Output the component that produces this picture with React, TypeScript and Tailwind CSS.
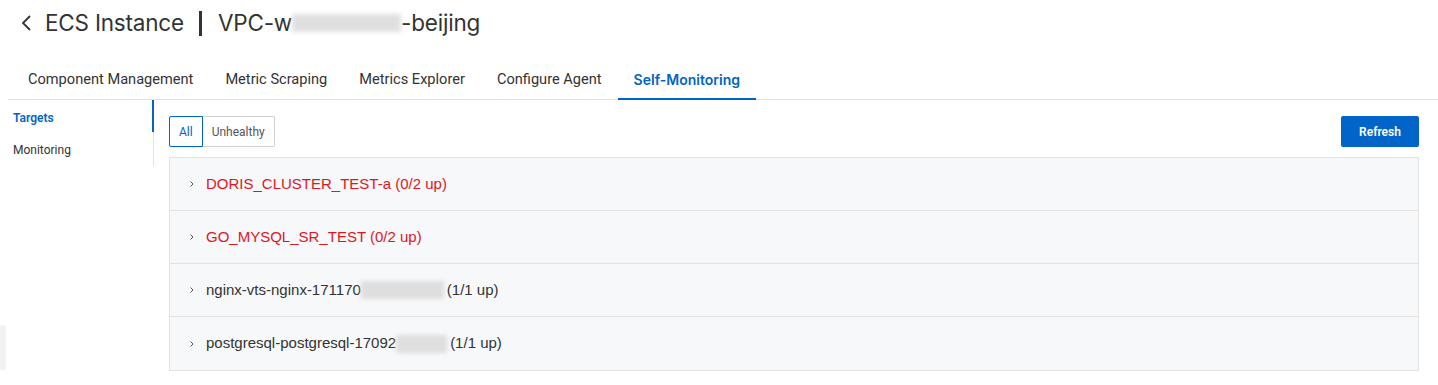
import React from 'react'

const font = { fontFamily: 'Roboto, "Noto Sans", sans-serif' }

const tabs = ['Component Management', 'Metric Scraping', 'Metrics Explorer', 'Configure Agent', 'Self-Monitoring']

const Chevron: React.FC = () => (
    <svg width="8" height="8" viewBox="0 0 8 8" className="shrink-0">
        <path d="M2.5 1.5 L5 4 L2.5 6.5" fill="none" stroke="#555" strokeWidth="1" />
    </svg>
)

const Blur: React.FC<{ w: number }> = ({ w }) => (
    <span
        className="inline-block h-[18px] align-middle bg-[#d8d8d8] blur-[2px] opacity-80"
        style={{ width: w }}
    />
)

const App: React.FC = () => {
    return (
        <div className="relative w-[1438px] h-[385px] bg-white text-[#333]" style={font}>
            {/* header */}
            <div className="flex items-center h-[46px] pl-[20px] font-['Inter',sans-serif]">
                <svg width="14" height="18" viewBox="0 0 14 18" className="mr-[11px]">
                    <path d="M10 2 L3 9 L10 16" fill="none" stroke="#333" strokeWidth="1.8" />
                </svg>
                <span className="text-[22.5px] tracking-[-0.2px]">ECS Instance</span>
                <span className="ml-[15px] mr-[16px] w-[3px] h-[25px] bg-[#333]" />
                <span className="flex items-center text-[22.5px] tracking-[-0.2px]">
                    VPC-w
                    <Blur w={109} />
                    -beijing
                </span>
            </div>

            {/* tabs */}
            <div className="ml-[8px] mt-[13px] flex border-b border-[#e0e0e0] pl-[4px] h-[41px]">
                {tabs.map((t) => {
                    const active = t === 'Self-Monitoring'
                    return (
                        <div
                            key={t}
                            className={
                                active
                                    ? "px-4 pt-[2px] flex items-center text-[14px] font-semibold font-['Inter',sans-serif] text-[#0064c8] border-b-2 border-[#0064c8] -mb-px"
                                    : 'px-4 pt-[2px] flex items-center text-[14.6px] text-[#333]'
                            }
                        >
                            {t}
                        </div>
                    )
                })}
            </div>

            <div className="flex">
                {/* side menu */}
                <div className="w-[154px] h-[66px] border-r border-[#e3e3e3] text-[12px]">
                    <div className="h-[32px] flex items-center pl-[13px] pt-[3px] font-semibold text-[#0064c8] border-r-2 border-[#0064c8] -mr-px">
                        Targets
                    </div>
                    <div className="h-[32px] flex items-center pl-[13px] pt-[3px]">Monitoring</div>
                </div>

                {/* main */}
                <div className="flex-1 pl-[15px] pr-[19px] pt-[16px]">
                    <div className="flex justify-between items-center">
                        <div className="flex text-[12px] h-[31px]">
                            <div className="px-[9px] flex items-center border border-[#0064c8] text-[#0064c8] rounded-l-[2px]">
                                All
                            </div>
                            <div className="px-[9px] flex items-center border border-l-0 border-[#d1d1d1] text-[#555] rounded-r-[2px]">
                                Unhealthy
                            </div>
                        </div>
                        <button className="h-[31px] w-[78px] bg-[#0064c8] text-white text-[12px] font-semibold rounded-[2px]">
                            Refresh
                        </button>
                    </div>

                    <div className="mt-[10px] border border-[#e3e3e3] bg-[#f7f8fa] font-['Liberation_Sans',Arial,sans-serif]">
                        <Row red>DORIS_CLUSTER_TEST-a (0/2 up)</Row>
                        <Row red>GO_MYSQL_SR_TEST (0/2 up)</Row>
                        <Row>
                            nginx-vts-nginx-171170
                            <Blur w={83} />
                            <span className="ml-[3px]">(1/1 up)</span>
                        </Row>
                        <Row last>
                            postgresql-postgresql-17092
                            <Blur w={51} />
                            <span className="ml-[3px]">(1/1 up)</span>
                        </Row>
                    </div>
                </div>
            </div>

            <div className="absolute left-0 top-[325px] w-[6px] h-[45px] bg-[#f2f2f2] rounded-r-[2px]" />
        </div>
    )
}

const Row: React.FC<{ red?: boolean; last?: boolean; children: React.ReactNode }> = ({ red, last, children }) => (
    <div
        className={
            'h-[53px] flex items-center pl-[18px] gap-[10px] text-[15px] ' +
            (last ? '' : 'border-b border-[#e3e3e3] ') +
            (red ? 'text-[#e0161e]' : 'text-[#333]')
        }
    >
        <Chevron />
        <span className="flex items-center">{children}</span>
    </div>
)

export default App
